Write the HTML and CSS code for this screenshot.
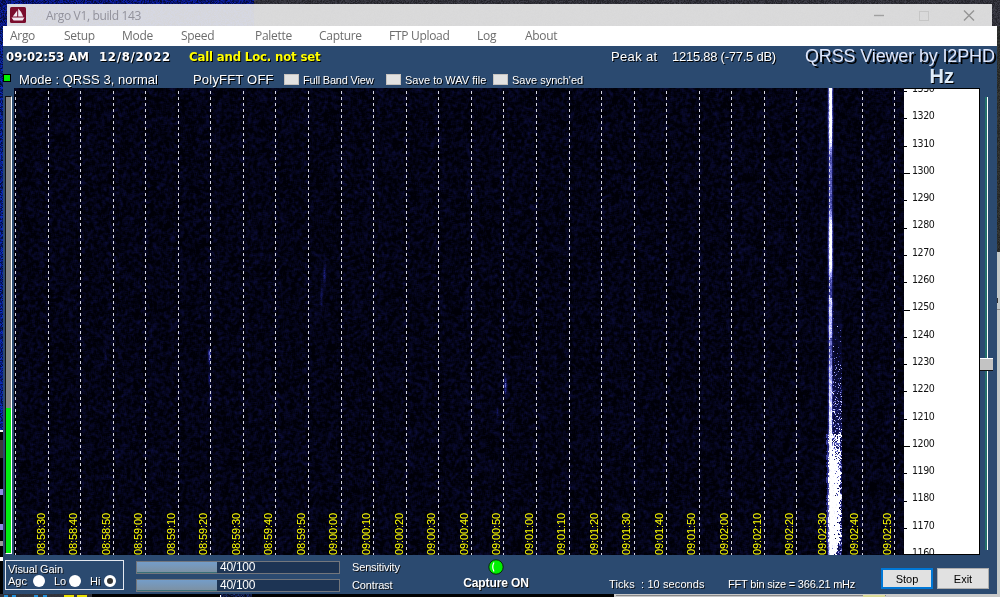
FILE: index.html
```html
<!DOCTYPE html>
<html lang="en">
<head>
  <meta charset="UTF-8">
  <title>Argo V1, build 143</title>
  <link rel="stylesheet" href="styles.css">
</head>
<body>
  <canvas id="desktop" class="desktop" width="1000" height="597"></canvas>

  <div class="window">
    <div class="titlebar">
      <svg class="app-icon" width="16" height="16" viewBox="0 0 16 16">
        <rect width="16" height="16" rx="1.5" fill="#7a0c2c"/>
        <path d="M8.2 1.5V9.5H13.2Q11.5 4.5 8.2 1.5ZM7.2 3.5Q5 6.5 2.8 9.5H7.2ZM1.5 10.6H14.5L12.6 13.6H3.6Z" fill="#f3e9f2"/>
      </svg>
      <span class="title">Argo V1, build 143</span>
      <svg class="win-buttons" width="110" height="20" viewBox="0 0 110 20" fill="none">
        <path d="M8 10.500H18" stroke="#a0a0a0" stroke-width="1.4"/>
        <rect x="53.500" y="6.500" width="9" height="9" stroke="#c6c6c6"/>
        <path d="M98 5.500L108 15.500M108 5.500L98 15.500" stroke="#959595" stroke-width="1.4"/>
      </svg>
    </div>

    <div class="menu">
      <span>Argo</span><span>Setup</span><span>Mode</span><span>Speed</span><span>Palette</span><span>Capture</span><span>FTP Upload</span><span>Log</span><span>About</span>
    </div>

    <div class="panel">
      <div class="row status">
        <b class="clock">09:02:53 AM</b>
        <b class="date">12/8/2022</b>
        <b class="call">Call and Loc. not set</b>
        <span class="peak">Peak at</span>
        <span class="peak-value">1215.88 (-77.5 dB)</span>
        <span class="brand">QRSS Viewer by I2PHD</span>
      </div>
      <div class="row options">
        <i class="lamp"></i>
        <span class="mode">Mode : QRSS 3, normal</span>
        <span class="poly">PolyFFT OFF</span>
        <i class="check"></i><span class="opt full">Full Band View</span>
        <i class="check"></i><span class="opt wav">Save to WAV file</span>
        <i class="check"></i><span class="opt">Save synch'ed</span>
        <b class="hz">Hz</b>
      </div>

      <div class="main">
        <div class="meter"><div class="meter-fill"></div></div>
        <div class="waterfall">
          <canvas id="spectrum" width="890" height="467"></canvas>
          <div class="times" id="times"></div>
        </div>
        <div class="scale" id="scale"></div>
        <div class="slider"><div class="track"></div><div class="thumb"></div></div>
      </div>

      <div class="footer">
        <div class="gain">
          <div>Visual Gain</div>
          <div class="radios">
            <span class="agc">Agc</span><i class="radio"></i>
            <span class="lo">Lo</span><i class="radio"></i>
            <span class="hi">Hi</span><i class="radio on"></i>
          </div>
        </div>
        <div class="bars">
          <div class="bar"><div class="fill"></div><span>40/100</span></div>
          <div class="bar"><div class="fill"></div><span>40/100</span></div>
        </div>
        <div class="bar-labels"><span>Sensitivity</span><span class="contrast">Contrast</span></div>
        <div class="capture">
          <svg width="16" height="16" viewBox="0 0 16 16">
            <circle cx="8" cy="8" r="7.2" fill="#00f000" stroke="#062806"/>
            <path d="M6 3.500Q3.500 8 6 12.500" fill="none" stroke="#fff" stroke-width="1.2"/>
          </svg>
          <b>Capture ON</b>
        </div>
        <div class="info ticks">Ticks &nbsp;: 10 seconds</div>
        <div class="info bin">FFT bin size = 366.21 mHz</div>
        <div class="buttons"><button class="stop">Stop</button><button>Exit</button></div>
      </div>
    </div>
  </div>

  <script src="script.js"></script>
</body>
</html>
```

FILE: styles.css
```css
body {
  margin: 0;
  width: 1000px;
  height: 597px;
  overflow: hidden;
  background: #000;
  font-family: "Liberation Sans", Arial, sans-serif;
}
i { font-style: normal; }
.desktop { position: absolute; z-index: -1; left: 0; top: 0; }
.window { width: 994px; margin: 4px 0 0 3px; }

.titlebar {
  display: flex;
  box-sizing: border-box;
  height: 22px;
  width: 985px;
  margin-left: 4px;
  padding-left: 3px;
  align-items: center;
  background: rgba(232, 232, 232, .92);
}
.title {
  margin-left: 20px;
  color: #92929c;
  font: 12px "Open Sans", sans-serif;
  letter-spacing: -.35px;
}
.win-buttons { margin: 0 16px 0 auto; }

.menu {
  display: grid;
  grid-template-columns: 54px 58px 59px 74px 64px 70px 88px 48px 60px;
  height: 20px;
  padding-left: 7px;
  background: #fff;
  color: #6d6d6d;
  font: 12px/20px "Open Sans", sans-serif;
  letter-spacing: -.3px;
}

.panel { height: 548px; background: #2b4a70; color: #fff; }
.row { display: flex; white-space: nowrap; text-shadow: 1px 1px 0 #000; }
.status { height: 21px; line-height: 21px; padding-left: 3px; font-size: 13px; }
.status b { font: bold 13px/21px "DejaVu Sans Condensed", "DejaVu Sans", sans-serif; }
.status .clock { width: 93px; letter-spacing: 0; }
.status .date { width: 90px; letter-spacing: .7px; }
.status .call { width: 422px; color: #ff0; letter-spacing: -.15px; }
.peak { width: 61px; letter-spacing: .35px; }
.peak-value { width: 133px; letter-spacing: -.25px; }
.brand { font-size: 18px; letter-spacing: -.15px; color: #dfe6fa; text-shadow: 2px 2px 0 #000; }

.options { height: 21px; align-items: center; font-size: 13px; }
.lamp { width: 6px; height: 6px; border: 1px solid #000; background: #00f000; margin-right: 8px; }
.mode { width: 174px; letter-spacing: .05px; }
.poly { width: 91px; letter-spacing: .2px; }
.mode, .poly, .opt, .check { position: relative; top: 2px; }
.check {
  box-sizing: border-box;
  width: 15px;
  height: 11px;
  margin-right: 4px;
  border: 1px solid #c7c3bf;
  background: #e2e2e2;
}
.opt { font-size: 11px; }
.full { width: 83px; letter-spacing: -.2px; }
.wav { width: 88px; }
.hz { margin: -2px 0 0 auto; padding-right: 43px; font-size: 20px; color: #dfecf8; }

.main { display: flex; height: 467px; }
.meter {
  box-sizing: border-box;
  display: flex;
  flex-direction: column;
  justify-content: flex-end;
  width: 7px;
  height: 458px;
  margin: 8px 2px 0 2px;
  border: 1px solid #111;
  border-right-color: #fff;
  border-bottom-color: #fff;
  background: #858585;
}
.meter-fill { height: 145px; background: #00ee10; }
.waterfall { position: relative; width: 890px; height: 467px; overflow: hidden; }
.waterfall canvas { display: block; }
.times {
  position: absolute;
  left: 2px;
  bottom: 0;
  display: grid;
  grid-template-columns: repeat(27, 32.56px);
}
.times span {
  justify-self: end;
  margin-right: 1px;
  writing-mode: vertical-rl;
  transform: rotate(180deg);
  color: #ff0;
  font-size: 11px;
  line-height: 13px;
  letter-spacing: -.1px;
}
.scale {
  box-sizing: border-box;
  width: 76px;
  height: 467px;
  overflow: hidden;
  border: solid #000;
  border-width: 1px 1px 1px 0;
  background: #fff;
  color: #111;
  font: 10.5px/27.3px "DejaVu Sans Condensed", "DejaVu Sans", sans-serif;
  letter-spacing: -.4px;
}
.scale div { display: flex; height: 27.3px; align-items: center; }
.scale div:first-child { margin-top: -14px; }
.scale i { width: 3px; height: 1px; margin: 6px 5px 0 0; background: #000; }
.scale .major { width: 6px; margin-right: 2px; }
.slider { display: flex; flex-direction: column; align-items: center; width: 13px; }
.track {
  width: 1px;
  height: 453px;
  margin-top: 9px;
  border: 1px solid #22716c;
  border-width: 0 0 0 2px;
  background: #fff;
}
.thumb {
  width: 13px;
  height: 11px;
  margin-top: -192px;
  border-top: 1px solid #fff;
  border-bottom: 1px solid #111;
  background: #c3c3c3;
}

.footer { display: flex; height: 39px; font-size: 11px; text-shadow: 1px 1px 0 #111; }
.gain {
  box-sizing: border-box;
  width: 119px;
  height: 30px;
  margin: 5px 0 0 2px;
  padding: 2px;
  border: 1px solid #e4e8f0;
  line-height: 13px;
}
.gain div:first-child { letter-spacing: -.1px; }
.radios { display: flex; align-items: center; height: 12px; margin-top: -1px; }
.radios span { width: 21px; margin-right: 4px; }
.radios .lo { width: 12px; margin: 0 3px 0 9px; }
.radios .hi { width: 11px; margin: 0 3px 0 9px; }
.radio { flex: none; box-sizing: border-box; width: 12px; height: 12px; border-radius: 50%; background: #fff; }
.radio.on { background: #333; border: 3px solid #fff; }
.bars { margin: 6px 12px 0 12px; }
.bar {
  box-sizing: border-box;
  display: flex;
  width: 204px;
  height: 13px;
  margin-bottom: 5px;
  border: 1px solid #73767c;
  background: #1d3454;
  line-height: 11px;
  font-size: 12px;
  text-shadow: none;
}
.fill { width: 80px; margin-right: 3px; background: linear-gradient(#749dc9, #7c91a4); border-bottom: 1px solid #397078; box-sizing: border-box; }
.bar span { letter-spacing: -.25px; }
.bar-labels { display: flex; flex-direction: column; width: 99px; line-height: 18px; margin-top: 3px; letter-spacing: -.15px; }
.capture { display: flex; flex-direction: column; align-items: center; width: 90px; margin-top: 4px; }
.capture b { font-size: 12px; line-height: 14px; white-space: nowrap; margin-top: 1px; letter-spacing: -.1px; }
.info { margin-top: 22px; line-height: 14px; white-space: nowrap; }
.ticks { width: 119px; margin-left: 68px; letter-spacing: .1px; }
.bin { width: 153px; letter-spacing: -.2px; }
.buttons { display: flex; gap: 4px; margin-top: 13px; }
button {
  box-sizing: border-box;
  width: 52px;
  height: 21px;
  padding: 0;
  border: 1px solid #adadad;
  background: #e1e1e1;
  color: #000;
  font: 11px "Liberation Sans", Arial, sans-serif;
}
.stop { border: 2px solid #0078d7; }
```

FILE: script.js
```javascript
let seed = 143;
function rnd() {
  seed = (seed * 1664525 + 1013904223) % 4294967296;
  return seed / 4294967296;
}

// time labels, one every 10 seconds
const times = document.getElementById('times');
for (let i = 0; i < 27; i++) {
  const t = 8 * 3600 + 58 * 60 + 30 + i * 10;
  const p = n => String(n).padStart(2, '0');
  times.innerHTML += `<span>${p(Math.floor(t / 3600))}:${p(Math.floor(t / 60) % 60)}:${p(t % 60)}</span>`;
}

// frequency scale
const scale = document.getElementById('scale');
for (let f = 1330; f >= 1160; f -= 10) {
  scale.innerHTML += `<div><i class="${f % 50 === 0 ? 'major' : ''}"></i>${f}</div>`;
}

const wave = (a, y) => Math.sin(y * .31 + a) + Math.sin(y * .83 + a * 2) + Math.sin(y * 1.7 + a);

// how bright the carrier is at column x, row y
function carrier(x, y) {
  const d = Math.abs(x - 816);
  let level;
  if (y < 45) level = 1.15;
  else if (y < 65) level = 1.15 - (y - 45) * .03;
  else if (y < 120) level = .5;
  else if (y < 140) level = .5 + (y - 120) * .03;
  else if (y < 175) level = 1.1;
  else if (y < 195) level = 1.1 - (y - 175) * .035;
  else if (y < 210) level = .42;
  else if (y < 250) level = .8;
  else if (y < 270) level = .5;
  else level = .65 + (y - 270) / 250;
  let v = d < 2 ? level : d < 3 ? level * .4 : d < 4 ? level * .12 : 0;

  // the wide foot on the right of the carrier
  const right = 826 + wave(1, y) * .6 - Math.max(0, y - 450) * .25;
  const left = 814 + wave(3, y) * .3 + Math.max(0, y - 450) * .08;
  if (y > 345 && x > left && x < right) {
    const fill = Math.min(.97, .5 + (y - 345) / 80) - (x > 822 ? .08 : 0);
    v = Math.max(v, rnd() < fill ? 1.1 : .15 + rnd() * .5);
  } else if (x > 816 && x < 828 && y > 200) {
    const k = Math.min(1, (y - 200) / 170);
    v = Math.max(v, rnd() < k * k * .45 ? .25 + rnd() * .65 : k * .2);
  } else if (y > 345 && x > left - 2 && x < left + 2) {
    v = Math.max(v, .35);
  }
  return v;
}

const echoes = [[195, 268, 7, .6], [195, 290, 6, .35], [196, 308, 8, .25], [310, 186, 9, .3],
                [307, 208, 12, .2], [491, 298, 7, .55], [483, 324, 6, .2], [91, 267, 5, .15]];

const sc = document.getElementById('spectrum').getContext('2d');
const W = 890, H = 467;
const noise = [];
for (let i = 0; i < W * H; i++) noise.push(rnd());
const img = sc.createImageData(W, H);
for (let y = 0; y < H; y++) {
  for (let x = 0; x < W; x++) {
    let n = 0;
    for (let dy = 0; dy < 3; dy++) {
      for (let dx = 0; dx < 3; dx++) n += noise[((y + dy) % H) * W + (x + dx) % W];
    }
    let v = Math.max(0, n / 9 - .4) * .36;
    for (const [ex, ey, len, amp] of echoes) {
      v += amp * Math.exp(-(((x - ex) / 1.3) ** 2) - ((y - ey) / len) ** 2) * (.6 + noise[y * W + x] * .6);
    }
    if (x > 805 && x < 840) v += carrier(x, y) * (.85 + noise[y * W + x] * .25);
    v = Math.min(1, v);
    const o = (y * W + x) * 4;
    img.data[o] = v < .35 ? v * 75 : 26 + (v - .35) * 352;
    img.data[o + 1] = v < .35 ? v * 85 : 30 + (v - .35) * 346;
    img.data[o + 2] = Math.min(255, 8 + v * 330);
    img.data[o + 3] = 255;
  }
}
sc.putImageData(img, 0, 0);

// dashed time marks
sc.fillStyle = '#d4d4e0';
for (let i = 0; i < 28; i++) {
  for (let y = 3; y < H; y += 6) sc.fillRect(Math.round(1 + i * 32.56), y, 1, 3);
}

// what shows round the window edges
const dc = document.getElementById('desktop').getContext('2d');
function grain(x, y, w, h, r, g, b, amount) {
  for (let j = y; j < y + h; j++) {
    for (let i = x; i < x + w; i++) {
      const n = (rnd() - .5) * amount;
      dc.fillStyle = `rgb(${r + n * r / 100},${g + n * g / 100},${b + n * b / 100})`;
      dc.fillRect(i, j, 1, 1);
    }
  }
}
grain(0, 0, 254, 26, 8, 20, 110, 120);
grain(254, 0, 746, 26, 48, 48, 56, 60);
grain(0, 26, 3, 404, 8, 28, 125, 120);
grain(997, 26, 3, 226, 44, 46, 44, 50);
grain(0, 594, 92, 3, 50, 52, 60, 10);
grain(220, 594, 32, 3, 20, 30, 70, 150);
function block(color, x, y, w, h) {
  dc.fillStyle = color;
  dc.fillRect(x, y, w, h);
}
block('#c4cac9', 997, 252, 3, 345);
block('#333', 997, 298, 1, 5);
block('#8b8b8b', 997, 309, 3, 1);
block('#eee', 0, 430, 3, 2);
block('#3a3a3a', 0, 440, 3, 18);
block('#8c8ce0', 0, 489, 3, 6);
block('#8c8ce0', 0, 524, 3, 6);
block('#999', 0, 541, 3, 5);
block('#fff', 0, 557, 3, 4);
block('#2492dc', 4, 595, 4, 2);
block('#2492dc', 12, 595, 4, 2);
block('#2492dc', 34, 595, 4, 2);
block('#2492dc', 43, 595, 4, 2);
block('#e8e000', 64, 595, 10, 2);
block('#e8e000', 77, 595, 10, 2);
block('#fff', 220, 595, 1, 2);
block('#c9c9c9', 614, 594, 386, 3);
block('#888', 616, 595, 270, 1);
block('#dcdc9a', 863, 595, 22, 2);
```
